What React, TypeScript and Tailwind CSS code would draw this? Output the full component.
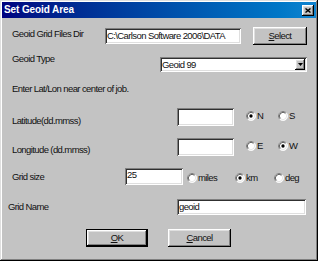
import React from 'react';

const raised = 'shadow-[inset_-1px_-1px_#000000,inset_1px_1px_#ffffff,inset_-2px_-2px_#808080,inset_2px_2px_#dfdfdf]';
const sunken = 'shadow-[inset_1px_1px_#808080,inset_-1px_-1px_#ffffff,inset_2px_2px_#303030,inset_-2px_-2px_#dfdfdf]';

const Radio: React.FC<{ checked?: boolean }> = ({ checked }) => (
    <svg width="10" height="10" viewBox="0 0 12 12" className="shrink-0">
        <circle cx="6" cy="6" r="5.5" fill="#ffffff" />
        <path d="M2.11 9.89A5.5 5.5 0 0 1 9.89 2.11" stroke="#808080" fill="none" />
        <path d="M9.89 2.11A5.5 5.5 0 0 1 2.11 9.89" stroke="#ffffff" fill="none" />
        <path d="M2.82 9.18A4.5 4.5 0 0 1 9.18 2.82" stroke="#303030" fill="none" />
        <path d="M9.18 2.82A4.5 4.5 0 0 1 2.82 9.18" stroke="#dfdfdf" fill="none" />
        {checked && <circle cx="6" cy="6" r="2" fill="#000000" />}
    </svg>
);

const RadioItem: React.FC<{ label: string; checked?: boolean; className?: string }> = ({ label, checked, className }) => (
    <div className={`flex items-start gap-[1px] ${className ?? ''}`}>
        <div className="mt-[3px]">
            <Radio checked={checked} />
        </div>
        <span className="mt-[2px]">{label}</span>
    </div>
);

export default function App() {
    return (
        <div className="w-[320px] h-[262px] bg-white font-['Liberation_Sans',Arial,sans-serif] text-[9.5px] leading-[12px] tracking-[-0.6px] text-[#111111]">
            <div className="w-[318px] h-[261px] bg-[#c3c3c3] p-[2px] flex flex-col shadow-[inset_-1px_-1px_#000000,inset_1px_1px_#dfdfdf,inset_-2px_-2px_#808080,inset_2px_2px_#ffffff]">
                {/* title bar */}
                <div className="h-[16px] flex items-center justify-between pl-[2px] pr-[2px] bg-linear-to-r from-[#000080] to-[#1084d0]">
                    <span className="text-white font-bold text-[10px] tracking-[-0.1px]">Set Geoid Area</span>
                    <div className={`w-[12px] h-[11px] bg-[#c3c3c3] flex items-center justify-center mt-[1px] ${raised}`}>
                        <svg width="6" height="5" viewBox="0 0 6 5">
                            <path d="M0.5 0.5L5.5 4.5M5.5 0.5L0.5 4.5" stroke="#000000" strokeWidth="1.4" />
                        </svg>
                    </div>
                </div>

                {/* Geoid Grid Files Dir */}
                <div className="mt-[9px] h-[18px] flex items-start">
                    <span className="ml-[10px] w-[93px] mt-[1px]">Geoid Grid Files Dir</span>
                    <div className={`w-[136px] h-[16px] mt-[1px] bg-white flex items-center pl-[2px] ${sunken}`}>
                        C:\Carlson Software 2006\DATA
                    </div>
                    <div className={`ml-[12px] w-[54px] h-[18px] flex items-center justify-center ${raised}`}>
                        <span><span className="underline">S</span>elect</span>
                    </div>
                </div>

                {/* Geoid Type */}
                <div className="mt-[8px] h-[19px] flex items-start">
                    <span className="ml-[10px] w-[148px]">Geoid Type</span>
                    <div className={`mt-[4px] w-[147px] h-[15px] bg-white flex items-center justify-between pl-[2px] pr-[2px] ${sunken}`}>
                        <span>Geoid 99</span>
                        <div className={`w-[10px] h-[11px] bg-[#c3c3c3] flex items-center justify-center ${raised}`}>
                            <svg width="5" height="3" viewBox="0 0 5 3">
                                <path d="M0 0H5L2.5 3Z" fill="#000000" />
                            </svg>
                        </div>
                    </div>
                </div>

                {/* hint */}
                <div className="mt-[11px] h-[12px] ml-[10px]">Enter Lat/Lon near center of job.</div>

                {/* Latitude */}
                <div className="mt-[13px] h-[18px] flex items-start">
                    <span className="ml-[10px] w-[165px] mt-[7px]">Latitude(dd.mmss)</span>
                    <div className={`w-[57px] h-[18px] bg-white ${sunken}`}></div>
                    <RadioItem label="N" checked className="ml-[12px] w-[32px]" />
                    <RadioItem label="S" />
                </div>

                {/* Longitude */}
                <div className="mt-[12px] h-[18px] flex items-start">
                    <span className="ml-[10px] w-[165px] mt-[6px]">Longitude (dd.mmss)</span>
                    <div className={`w-[57px] h-[18px] bg-white ${sunken}`}></div>
                    <RadioItem label="E" className="ml-[12px] w-[32px]" />
                    <RadioItem label="W" checked />
                </div>

                {/* Grid size */}
                <div className="mt-[12px] h-[17px] flex items-start">
                    <span className="ml-[10px] w-[113px] mt-[3px]">Grid size</span>
                    <div className={`w-[58px] h-[17px] bg-white pl-[2px] pt-[1px] ${sunken}`}>25</div>
                    <RadioItem label="miles" className="ml-[4px] w-[48px] mt-[2px]" />
                    <RadioItem label="km" checked className="w-[39px] mt-[2px]" />
                    <RadioItem label="deg" className="mt-[2px]" />
                </div>

                {/* Grid Name */}
                <div className="mt-[14px] h-[16px] flex items-start">
                    <span className="ml-[6px] w-[169px] mt-[2px]">Grid Name</span>
                    <div className={`w-[129px] h-[16px] bg-white flex items-center pl-[2px] ${sunken}`}>geoid</div>
                </div>

                {/* buttons */}
                <div className="mt-[14px] h-[18px] flex items-start">
                    <div className="ml-[84px] w-[62px] h-[18px] border border-black">
                        <div className={`w-full h-full flex items-center justify-center ${raised}`}>
                            <span><span className="underline">O</span>K</span>
                        </div>
                    </div>
                    <div className={`ml-[20px] w-[63px] h-[18px] flex items-center justify-center ${raised}`}>
                        <span><span className="underline">C</span>ancel</span>
                    </div>
                </div>
            </div>
        </div>
    );
}
